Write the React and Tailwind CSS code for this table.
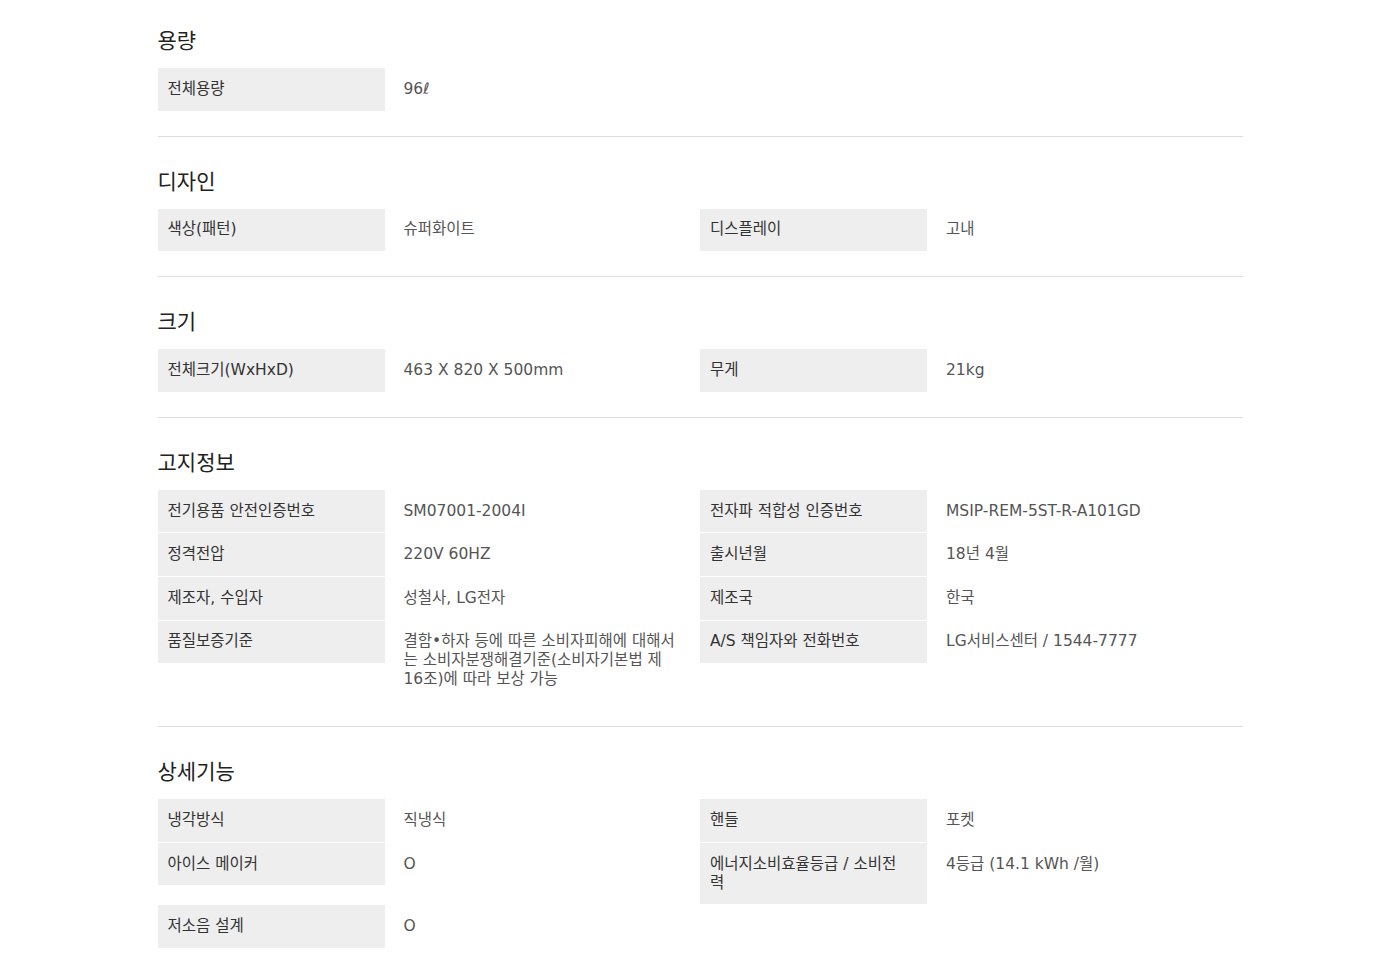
import React from "react";

const specData = [
  {
    title: "용량",
    items: [{ label: "전체용량", value: "96ℓ" }],
  },
  {
    title: "디자인",
    items: [
      { label: "색상(패턴)", value: "슈퍼화이트" },
      { label: "디스플레이", value: "고내" },
    ],
  },
  {
    title: "크기",
    items: [
      { label: "전체크기(WxHxD)", value: "463 X 820 X 500mm" },
      { label: "무게", value: "21kg" },
    ],
  },
  {
    title: "고지정보",
    items: [
      { label: "전기용품 안전인증번호", value: "SM07001-2004I" },
      { label: "전자파 적합성 인증번호", value: "MSIP-REM-5ST-R-A101GD" },
      { label: "정격전압", value: "220V 60HZ" },
      { label: "출시년월", value: "18년 4월" },
      { label: "제조자, 수입자", value: "성철사, LG전자" },
      { label: "제조국", value: "한국" },
      {
        label: "품질보증기준",
        value: "결함•하자 등에 따른 소비자피해에 대해서는 소비자분쟁해결기준(소비자기본법 제16조)에 따라 보상 가능",
      },
      { label: "A/S 책임자와 전화번호", value: "LG서비스센터 / 1544-7777" },
    ],
  },
  {
    title: "상세기능",
    items: [
      { label: "냉각방식", value: "직냉식" },
      { label: "핸들", value: "포켓" },
      { label: "아이스 메이커", value: "O" },
      { label: "에너지소비효율등급 / 소비전력", value: "4등급 (14.1 kWh /월)" },
      { label: "저소음 설계", value: "O" },
    ],
  },
];

function SpecItem({ label, value }) {
  return (
    <div className="flex items-start">
      <div className="w-[227px] shrink-0 bg-[#eeeeee] pl-[10px] pr-[22px] py-[11.8px] leading-[19px] text-[15.5px] text-[#333333]">
        {label}
      </div>
      <div className="flex-1 pl-[19px] pr-[22px] py-[11.8px] leading-[19px] text-[15.5px] text-[#555555]">{value}</div>
    </div>
  );
}

export default function App() {
  return (
    <div
      className="min-h-screen bg-white pt-[26px]"
      style={{ fontFamily: '"DejaVu Sans", "Noto Sans CJK KR", sans-serif' }}
    >
      <div className="mx-auto w-[1085px]">
        {specData.map((section, index) => (
          <div
            key={section.title}
            className={`border-b border-[#dddddd] pb-[25px] ${index === 0 ? "pt-0" : "pt-[30px]"}`}
          >
            <h3 className="mb-3 text-[21px] leading-[30px] text-[#222222]">{section.title}</h3>
            <div className="grid grid-cols-2 gap-y-px">
              {section.items.map((item) => (
                <SpecItem key={item.label} label={item.label} value={item.value} />
              ))}
            </div>
          </div>
        ))}
      </div>
    </div>
  );
}
